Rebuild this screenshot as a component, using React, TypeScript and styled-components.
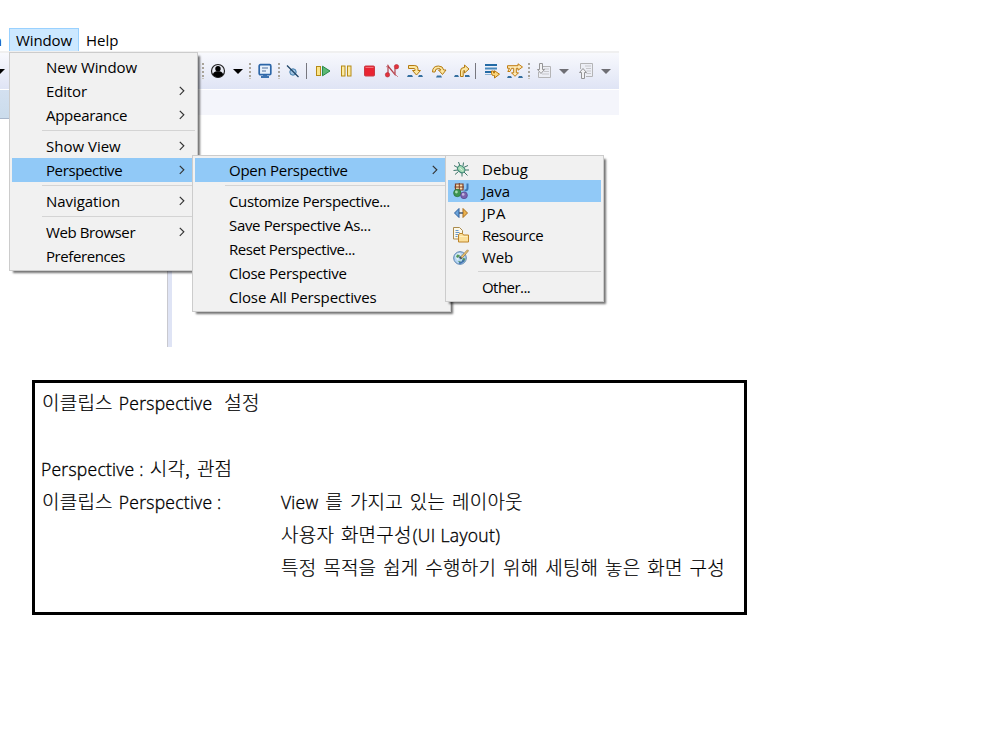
import React from "react";
import styled, { createGlobalStyle } from "styled-components";

const Global = createGlobalStyle`
  * { box-sizing: border-box; }
  body { margin: 0; background: #fff; color: #000; overflow: hidden; }
`;

const Page = styled.div`
  position: relative;
  display: flex;
  flex-direction: column;
  width: 981px;
  height: 732px;
  font-family: "Open Sans", "Noto Sans", "Noto Sans CJK KR", sans-serif;
  font-size: 15px;
  font-weight: 400;
  line-height: 24px;
`;

const Ide = styled.section`
  display: flex;
  flex-direction: column;
  width: 619px;
  height: 347px;
`;

const MenuBar = styled.nav`
  display: flex;
  height: 51px;
  padding: 28px 0 0;
`;

const ClippedItem = styled.span`
  display: flex;
  justify-content: flex-end;
  width: 2px;
  margin-right: 7px;
  overflow: hidden;
  color: #003a8c;
`;

const BarItem = styled.span<{ $active?: boolean; $track?: number }>`
  height: 24px;
  padding: 0 6px;
  line-height: 22px;
  border: 1px solid ${(p) => (p.$active ? "#99d1ff" : "transparent")};
  background: ${(p) => (p.$active ? "#cce8ff" : "transparent")};
  letter-spacing: ${(p) => p.$track ?? 0}px;
  white-space: nowrap;
`;

const Toolbar = styled.div`
  display: flex;
  align-items: center;
  height: 39px;
  border-top: 2px solid #f0f0f0;
  border-bottom: 1px solid #fff;
  background: linear-gradient(#f8f9fd, #dfe4f5);
`;

const Slot = styled.span<{ $w: number; $gap: number }>`
  display: flex;
  flex: none;
  width: ${(p) => p.$w}px;
  margin-left: ${(p) => p.$gap}px;
  svg { display: block; }
`;

const TabStrip = styled.div`
  display: flex;
  height: 25px;
  flex: none;
  background: #f4f5fb;
`;

const TabEdge = styled.div`
  width: 10px;
  height: 29px;
  background: linear-gradient(#d3e0f0, #cbdcec);
  border-bottom: 1px solid #a9b7cb;
`;

const Workbench = styled.div`
  display: flex;
  flex: 1;
  padding-left: 167px;
`;

const Sash = styled.div`
  width: 5px;
  border-left: 1px solid #c9c9cf;
  background: #dfe4f5;
`;

const Menu = styled.div<{ $x: number; $y: number; $w: number }>`
  position: absolute;
  left: ${(p) => p.$x}px;
  top: ${(p) => p.$y}px;
  width: ${(p) => p.$w}px;
  display: flex;
  flex-direction: column;
  padding: 2px;
  border: 1px solid #ccc;
  background: #f1f1f1;
  box-shadow: 3px 3px 2px -1px rgba(0, 0, 0, 0.55);
`;

const Item = styled.div<{ $active?: boolean; $h?: number; $track?: number; $indent?: number }>`
  display: flex;
  align-items: center;
  justify-content: space-between;
  flex: none;
  height: ${(p) => p.$h ?? 24}px;
  line-height: ${(p) => p.$h ?? 24}px;
  padding-left: ${(p) => p.$indent ?? 34}px;
  background: ${(p) => (p.$active ? "#91c9f7" : "transparent")};
  letter-spacing: ${(p) => p.$track ?? 0}px;
  white-space: nowrap;
`;

const IconItem = styled(Item)`
  justify-content: flex-start;
  gap: 13px;
  padding-left: 5px;
`;

const Separator = styled.div<{ $indent?: number }>`
  flex: none;
  height: 1px;
  margin: 3px 0 3px ${(p) => p.$indent ?? 30}px;
  background: #d4d4d4;
`;

const Arrow = styled.svg<{ $right: number }>`
  display: block;
  margin-right: ${(p) => p.$right}px;
`;

const Note = styled.section`
  width: 715px;
  height: 235px;
  margin: 33px 0 0 32px;
  padding: 2px 0 0 7px;
  border: 3px solid #000;
`;

const NoteLine = styled.div`
  display: flex;
  align-items: baseline;
  height: 33px;
  line-height: 33px;
  white-space: pre;
`;

const Term = styled.div`
  display: flex;
  align-items: baseline;
  width: 239px;
`;

const Ko = styled.span<{ $gap?: number }>`
  margin-left: ${(p) => p.$gap ?? 0}px;
  font-family: "Noto Sans CJK KR", sans-serif;
  font-size: 19px;
  font-weight: 300;
  letter-spacing: 0.22px;
  word-spacing: 2.4px;
  -webkit-text-stroke: 0.2px #000;
`;

const En = styled.span<{ $gap?: number; $track?: number }>`
  margin-left: ${(p) => p.$gap ?? 0}px;
  font-size: 17.5px;
  font-weight: 300;
  letter-spacing: ${(p) => p.$track ?? 0.26}px;
  -webkit-text-stroke: 0.35px #000;
`;

const Svg = ({ children, w = 16 }: { children: React.ReactNode; w?: number }) => (
  <svg width={w} height="16" viewBox={`0 0 ${w} 16`} fill="none">{children}</svg>
);

const Chevron = ({ right = 10 }: { right?: number }) => (
  <Arrow $right={right} width="6" height="10" viewBox="0 0 6 10" fill="none">
    <path d="M.8 .8 4.8 4.8 .8 8.8" stroke="#333" strokeWidth="1.2" />
  </Arrow>
);

const Dots = () => (
  <Svg w={3}>
    {[0, 4, 8, 12].map((y) => <rect key={y} x="0" y={y} width="2" height="2" fill="#a9a49a" />)}
    <path d="M0 15h2v1H0z" fill="#c7c3bb" />
  </Svg>
);
const Caret = ({ fill = "#000" }: { fill?: string }) => (
  <Svg w={10}><path d="M0 6h10L5 11z" fill={fill} /></Svg>
);
const Rule = () => <Svg w={1}><path d="M0 -1h1v18H0z" fill="#77777f" /></Svg>;

const Person = () => (
  <Svg>
    <circle cx="8" cy="8" r="6.5" fill="#e9ebf4" stroke="#222" strokeWidth="1.2" />
    <circle cx="8" cy="5.7" r="2.7" fill="#000" />
    <path d="M2.8 11.2C3.6 8.7 5.8 8.3 8 8.3s4.4.4 5.2 2.9C12 13.4 10 14.3 8 14.3s-4-.9-5.2-3.1z" fill="#000" />
  </Svg>
);
const Monitor = () => (
  <Svg>
    <rect x="2.2" y="1.7" width="11.6" height="10" rx="1.2" fill="#e9f2fc" stroke="#2c66a8" strokeWidth="1.7" />
    <path d="M5 5h6M5 8h4" stroke="#4f6f9c" />
    <path d="M6 12h4v1h2v2H4v-2h2z" fill="#3d73b0" />
  </Svg>
);
const SkipBreakpoints = () => (
  <Svg>
    <circle cx="9" cy="9" r="3.2" fill="#a3c4e2" stroke="#3f7cab" />
    <path d="M3 2.500 14.500 14" stroke="#1e4467" strokeWidth="1.200" />
  </Svg>
);
const Resume = () => (
  <Svg>
    <rect x="1.500" y="3.500" width="4" height="9" fill="#fbe489" stroke="#b58a16" />
    <path d="M7.500 3.200v9.600L15 8z" fill="#5cb974" stroke="#2b8a48" />
  </Svg>
);
const Pause = () => (
  <Svg>
    <rect x="2.500" y="3" width="3.500" height="10" fill="#fbeaa4" stroke="#b58a16" />
    <rect x="8.500" y="3" width="3.500" height="10" fill="#fbeaa4" stroke="#b58a16" />
  </Svg>
);
const Stop = () => (
  <Svg>
    <rect x="3.500" y="3" width="10" height="10" rx="1" fill="#e92432" stroke="#c93a44" />
    <path d="M4.500 4.500h8" stroke="#f37179" />
  </Svg>
);
const Disconnect = () => (
  <Svg>
    <path d="M4 11V3l7 8.500V5" stroke="#b4414b" strokeWidth="1.200" />
    <circle cx="3.500" cy="11.800" r="2.200" fill="#e3333e" stroke="#b22833" strokeWidth=".6" />
    <circle cx="12.500" cy="3.700" r="2.200" fill="#e3333e" stroke="#b22833" strokeWidth=".6" />
    <path d="m9 9 5 5M2 4l3-2" stroke="#c65a62" strokeWidth=".7" />
  </Svg>
);
const Feet = ({ d }: { d: string }) => <path d={d} fill="#356f9f" />;
const StepInto = () => (
  <Svg>
    <path d="M1.500 2.500h6.300q3.200 0 3.200 3.300v1.700h2.500L9.500 12 5.500 7.500H8V6.400Q8 5.500 7 5.500H1.500z" fill="#fce7a2" stroke="#b47b13" />
    <Feet d="M1 12h4l1 2H0zM12 12h3l1 2h-5z" />
  </Svg>
);
const StepOver = () => (
  <Svg>
    <path d="M1.500 9Q1.500 3 7.500 3q4.500 0 5.200 4h2.300L11.500 11.500 7.500 7H10Q9.500 5.500 7.500 5.500 4 5.500 4 9z" fill="#fce7a2" stroke="#b47b13" />
    <Feet d="M6 12.500h4l1 2H5z" />
  </Svg>
);
const StepReturn = () => (
  <Svg>
    <path d="M6.500 13.500V8Q6.500 4.500 10 4.500h.5V2L15 6l-4.500 4V7.500H10q-.8 0-.8 1v5z" fill="#fce7a2" stroke="#b47b13" />
    <Feet d="M1 12h3l1 2H0zM11 12h4l1 2h-5z" />
  </Svg>
);
const DropToFrame = () => (
  <Svg>
    <path d="M1 1h12v2H1zM1 8h7v2H1z" fill="#246ba6" />
    <path d="M1 4.500h12v2H1z" fill="#4a8abd" />
    <path d="M1 11h6v1H1z" fill="#8cb2d4" />
    <path d="M7.500 8v2.500q0 2 2 2h1V15l5-3.800-5-3.500v2.300H9.500V8z" fill="#fcd67b" stroke="#b8770d" />
  </Svg>
);
const StepFilters = () => (
  <Svg>
    <path d="M.5 2.700h10.500V.8L15.500 4 11 7.200V5.300H9.300v4.500h2.200L8 13.300 4.500 9.800h2.200V5.300H4.500L3 8.500H.8L2.500 5.300H.5z" fill="#fdeab8" stroke="#c07c10" />
    <Feet d="M1 13h3l1 2H0zM12 13h3l1 2h-5z" />
  </Svg>
);
const LogDown = () => (
  <Svg>
    <path d="M7 3.500h7.500v11H2.500V9" fill="#eceef5" stroke="#b4b4b6" />
    <path d="M8 6h5M8 8.500h5M6 11h7" stroke="#c6c6ca" />
    <path d="M3.500.5h3v6h2L5 10.500 1.500 6.500h2z" fill="#f2f2f4" stroke="#949496" />
  </Svg>
);
const LogUp = () => (
  <Svg>
    <path d="M2.500 6V.5h12v13H8" fill="#eceef5" stroke="#b4b4b6" />
    <path d="M7 3h6M8 5.500h5M8.500 8h4.500M8.500 10.500h4.500" stroke="#c6c6ca" />
    <path d="M3.500 15.500v-6h-2L5 5.500l3.500 4h-2v6z" fill="#f2f2f4" stroke="#949496" />
  </Svg>
);

const DebugIcon = () => (
  <Svg>
    <path d="M1 4.500 5.500 7M2 13.500l3.500-3M5.500 1 7 5M10.500 1.500 10 5M15 4.500l-4.500 2M16 9h-5M14.500 14.500 10.500 10.500M9 15.500V11M.5 9.500 5 9" stroke="#3d7468" />
    <ellipse cx="8.200" cy="8.200" rx="4" ry="3" transform="rotate(40 8.200 8.200)" fill="#a5dab5" stroke="#3f8876" />
    <path d="m6.500 6.800 3 2.700" stroke="#dff5e0" />
  </Svg>
);
const JavaIcon = () => (
  <Svg>
    <path d="M2.500 1h7.500v6H2.500z" fill="#f7dcae" stroke="#7c3f27" strokeWidth="1.200" />
    <path d="M6.300 0v8M1.500 4h9.500" stroke="#7c3f27" />
    <path d="M14.500.5v4.700q0 2.300-3 2.300" stroke="#3b78b8" strokeWidth="2" />
    <circle cx="4.300" cy="10" r="3.700" fill="#3d9450" stroke="#28713a" strokeWidth=".7" />
    <circle cx="3.400" cy="9" r="1.400" fill="#a9dbaf" />
    <circle cx="11" cy="12.300" r="3.400" fill="#7a62ae" stroke="#51408a" strokeWidth=".7" />
    <circle cx="10.200" cy="11.400" r="1.300" fill="#c3b5e0" />
  </Svg>
);
const JpaIcon = () => (
  <Svg>
    <path d="M6 3.500v9L1.500 8z" fill="#6ba4da" stroke="#2c5f9e" />
    <path d="M10 3.500v9L14.500 8z" fill="#eab250" stroke="#a96f1b" />
    <path d="M6 8h4" stroke="#44546b" strokeWidth="1.500" />
  </Svg>
);
const ResourceIcon = () => (
  <Svg>
    <path d="M.5.500h6l3 3v8.500H.5z" fill="#fbf8ea" stroke="#ab8b4c" />
    <path d="M2.500 3.500h3M2.500 5.500h4M2.500 7.500h3M2.500 9.500h2" stroke="#6796c9" />
    <path d="M5.500 15V8l1-1.500h3l1 1.500h5v7z" fill="#fbdf9a" stroke="#bd842a" />
    <path d="M6.500 9.500h8" stroke="#fff0bd" />
  </Svg>
);
const WebIcon = () => (
  <Svg>
    <circle cx="7" cy="9" r="6.300" fill="#b5d5f3" stroke="#5680ae" />
    <path d="M2.500 6Q4.500 3.500 7 4L8 6 5 8.500 6 10 4.500 11.500Q2 9 2.500 6z" fill="#dff0f8" />
    <path d="M4 5.500 7 6 5 9 3 8zM10 9l2.500.5-1.500 3.500-2-1zM5 12l3 .5-1 2z" fill="#52975b" />
    <path d="M11 11q-2 3-5 3" stroke="#3e6fae" strokeWidth="1.500" />
    <path d="m14.500.8 1 1L9.500 8.800 7.500 10 8 7.500z" fill="#f3cb73" stroke="#8a6a3b" strokeWidth=".7" />
    <path d="M6 7.500q0 3 3.200 2L7.800 7.500z" fill="#3a4f64" />
  </Svg>
);

const tools: { w: number; gap: number; icon: React.ReactNode }[] = [
  { w: 3, gap: 197, icon: <Dots /> },
  { w: 16, gap: 5, icon: <Person /> },
  { w: 10, gap: 7, icon: <Caret /> },
  { w: 3, gap: 6, icon: <Dots /> },
  { w: 16, gap: 5, icon: <Monitor /> },
  { w: 3, gap: 5, icon: <Dots /> },
  { w: 16, gap: 3, icon: <SkipBreakpoints /> },
  { w: 1, gap: 6, icon: <Rule /> },
  { w: 16, gap: 8, icon: <Resume /> },
  { w: 16, gap: 8, icon: <Pause /> },
  { w: 16, gap: 6, icon: <Stop /> },
  { w: 16, gap: 7, icon: <Disconnect /> },
  { w: 16, gap: 7, icon: <StepInto /> },
  { w: 16, gap: 8, icon: <StepOver /> },
  { w: 16, gap: 7, icon: <StepReturn /> },
  { w: 1, gap: 5, icon: <Rule /> },
  { w: 16, gap: 8, icon: <DropToFrame /> },
  { w: 16, gap: 7, icon: <StepFilters /> },
  { w: 3, gap: 5, icon: <Dots /> },
  { w: 16, gap: 5, icon: <LogDown /> },
  { w: 10, gap: 7, icon: <Caret fill="#6e6e74" /> },
  { w: 16, gap: 9, icon: <LogUp /> },
  { w: 10, gap: 7, icon: <Caret fill="#6e6e74" /> },
];

export default function App() {
  return (
    <Page>
      <Global />
      <Ide>
        <MenuBar>
          <ClippedItem>n</ClippedItem>
          <BarItem $active $track={-0.12}>Window</BarItem>
          <BarItem>Help</BarItem>
        </MenuBar>
        <Toolbar>
          <Slot $w={5} $gap={0}>
            <svg width="5" height="16" viewBox="0 0 5 16"><path d="M0 6h5L0 11z" fill="#000" /></svg>
          </Slot>
          {tools.map((t, i) => (
            <Slot key={i} $w={t.w} $gap={t.gap}>{t.icon}</Slot>
          ))}
        </Toolbar>
        <TabStrip><TabEdge /></TabStrip>
        <Workbench><Sash /></Workbench>
      </Ide>

      <Menu $x={9} $y={52} $w={189}>
        <Item $track={-0.09}>New Window</Item>
        <Item $track={-0.15}>Editor<Chevron /></Item>
        <Item $track={-0.28}>Appearance<Chevron /></Item>
        <Separator />
        <Item>Show View<Chevron /></Item>
        <Item $active $track={-0.4}>Perspective<Chevron /></Item>
        <Separator />
        <Item $track={-0.06}>Navigation<Chevron /></Item>
        <Separator />
        <Item $track={-0.4}>Web Browser<Chevron /></Item>
        <Item $track={-0.42}>Preferences</Item>
      </Menu>

      <Menu $x={192} $y={155} $w={259}>
        <Item $active $track={-0.26}>Open Perspective<Chevron right={10} /></Item>
        <Separator />
        <Item $track={-0.36}>Customize Perspective...</Item>
        <Item $track={-0.34}>Save Perspective As...</Item>
        <Item $track={-0.44}>Reset Perspective...</Item>
        <Item $track={-0.27}>Close Perspective</Item>
        <Item $track={-0.13}>Close All Perspectives</Item>
      </Menu>

      <Menu $x={445} $y={155} $w={159}>
        <IconItem $h={22}><DebugIcon />Debug</IconItem>
        <IconItem $h={22} $active><JavaIcon />Java</IconItem>
        <IconItem $h={22} $track={0.5}><JpaIcon />JPA</IconItem>
        <IconItem $h={22} $track={-0.45}><ResourceIcon />Resource</IconItem>
        <IconItem $h={22} $track={-0.1}><WebIcon />Web</IconItem>
        <Separator />
        <Item $track={-0.55}>Other...</Item>
      </Menu>

      <Note>
        <NoteLine><Ko>이클립스</Ko><En $gap={6}>Perspective</En><Ko $gap={12}>설정</Ko></NoteLine>
        <NoteLine />
        <NoteLine><En $gap={-1}>Perspective :</En><Ko $gap={6}>시각, 관점</Ko></NoteLine>
        <NoteLine>
          <Term><Ko>이클립스</Ko><En $gap={6}>Perspective :</En></Term>
          <En>View</En><Ko $gap={7}>를 가지고 있는 레이아웃</Ko>
        </NoteLine>
        <NoteLine><Term /><Ko>사용자 화면구성</Ko><En $gap={1} $track={0.35}>(UI Layout)</En></NoteLine>
        <NoteLine><Term /><Ko>특정 목적을 쉽게 수행하기 위해 세팅해 놓은 화면 구성</Ko></NoteLine>
      </Note>
    </Page>
  );
}
